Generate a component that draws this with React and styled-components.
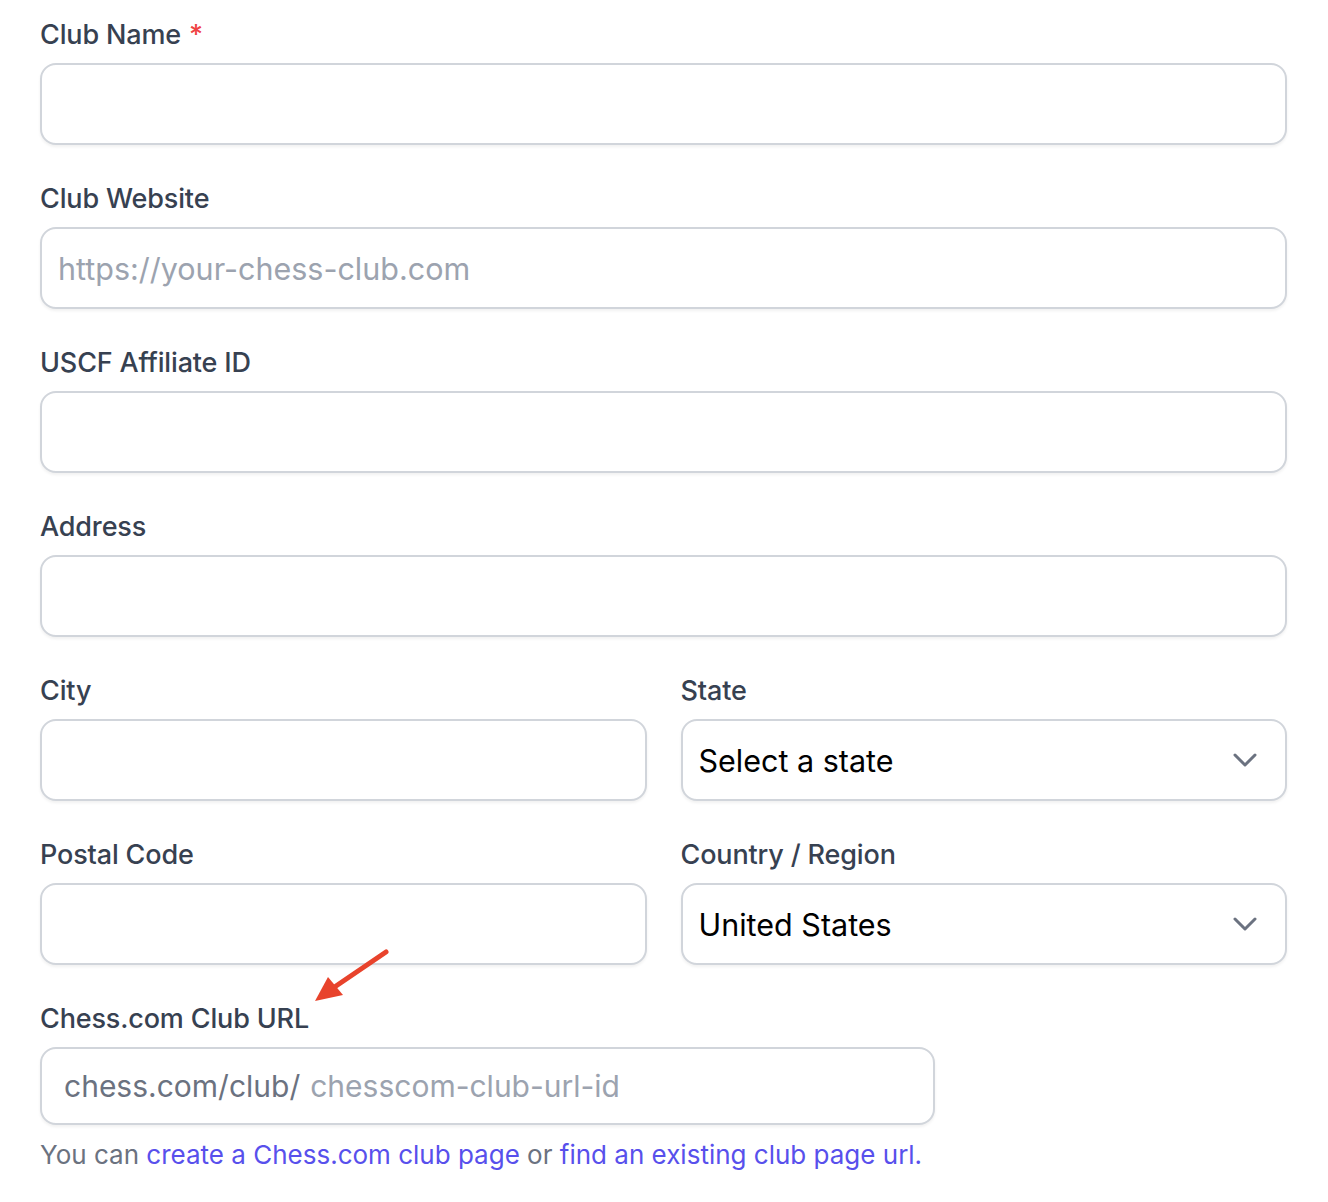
import React from "react";
import styled, { createGlobalStyle } from "styled-components";

const GlobalStyle = createGlobalStyle`
  html, body {
    margin: 0;
    background: #ffffff;
  }
  body {
    font-family: Inter, "Noto Sans", "Liberation Sans", sans-serif;
    -webkit-font-smoothing: antialiased;
  }
  * {
    box-sizing: border-box;
  }
`;

const Page = styled.div`
  position: relative;
  width: 1328px;
  min-height: 1202px;
  padding: 15px 41px 0 40px;
`;

const Form = styled.form`
  display: grid;
  row-gap: 34px;
`;

const TwoCol = styled.div`
  display: grid;
  grid-template-columns: 1fr 1fr;
  column-gap: 34px;
`;

const Field = styled.div`
  display: flex;
  flex-direction: column;
  gap: 8px;
  width: ${(p) => p.width || "100%"};
`;

const Label = styled.label`
  font-size: 27px;
  line-height: 40px;
  font-weight: 500;
  letter-spacing: -0.15px;
  color: #374151;
`;

const Required = styled.span`
  color: #ef4444;
  margin-left: 8px;
`;

const Input = styled.input`
  height: 82px;
  width: 100%;
  padding: 0 16px;
  border: 2px solid #d1d5db;
  border-radius: 16px;
  box-shadow: 0 2px 3px rgba(0, 0, 0, 0.06);
  font-family: inherit;
  font-size: 30.5px;
  color: #111827;
  background: #fff;
  outline: none;

  &::placeholder {
    color: #9ca3af;
  }
`;

const SelectBox = styled.div`
  height: 82px;
  display: flex;
  align-items: center;
  padding: 0 28px 0 0;
  border: 2px solid #d1d5db;
  border-radius: 16px;
  box-shadow: 0 2px 3px rgba(0, 0, 0, 0.06);
  background: #fff;
`;

const Select = styled.select`
  flex: 1;
  height: 100%;
  appearance: none;
  border: none;
  background: transparent;
  padding: 0 16px;
  font-family: inherit;
  font-size: 30.5px;
  color: #000;
  outline: none;
`;

const Chevron = styled.svg`
  width: 24px;
  height: 14px;
  flex: none;
`;

const UrlBox = styled.div`
  height: 78px;
  display: flex;
  align-items: center;
  padding: 0 22px;
  border: 2px solid #d1d5db;
  border-radius: 16px;
  box-shadow: 0 2px 3px rgba(0, 0, 0, 0.06);
  background: #fff;
`;

const Prefix = styled.span`
  font-size: 30px;
  color: #6b7280;
  white-space: nowrap;
`;

const UrlInput = styled.input`
  flex: 1;
  border: none;
  outline: none;
  padding: 0 0 0 10px;
  font-family: inherit;
  font-size: 30px;
  background: transparent;

  &::placeholder {
    color: #9ca3af;
  }
`;

const Help = styled.p`
  margin: 2px 0 0;
  font-size: 26px;
  line-height: 40px;
  color: #6b7280;
`;

const Link = styled.a`
  color: #5850ec;
  text-decoration: none;
`;

const Arrow = styled.svg`
  position: absolute;
  left: 310px;
  top: 946px;
  width: 82px;
  height: 60px;
  pointer-events: none;
`;

function ChevronDown() {
  return (
    <Chevron viewBox="0 0 24 14" fill="none">
      <path
        d="M2 2l10 10L22 2"
        stroke="#6b7280"
        strokeWidth="3"
        strokeLinecap="round"
        strokeLinejoin="round"
      />
    </Chevron>
  );
}

function SelectField({ label, value, options }) {
  return (
    <Field>
      <Label>{label}</Label>
      <SelectBox>
        <Select defaultValue={value}>
          {options.map((o) => (
            <option key={o}>{o}</option>
          ))}
        </Select>
        <ChevronDown />
      </SelectBox>
    </Field>
  );
}

export default function App() {
  return (
    <>
      <GlobalStyle />
      <Page>
        <Form onSubmit={(e) => e.preventDefault()}>
          <Field>
            <Label>
              Club Name<Required>*</Required>
            </Label>
            <Input type="text" />
          </Field>

          <Field>
            <Label>Club Website</Label>
            <Input type="url" placeholder="https://your-chess-club.com" />
          </Field>

          <Field>
            <Label>USCF Affiliate ID</Label>
            <Input type="text" />
          </Field>

          <Field>
            <Label>Address</Label>
            <Input type="text" />
          </Field>

          <TwoCol>
            <Field>
              <Label>City</Label>
              <Input type="text" />
            </Field>
            <SelectField
              label="State"
              value="Select a state"
              options={["Select a state", "California", "New York", "Texas"]}
            />
          </TwoCol>

          <TwoCol>
            <Field>
              <Label>Postal Code</Label>
              <Input type="text" />
            </Field>
            <SelectField
              label="Country / Region"
              value="United States"
              options={["United States", "Canada", "Mexico"]}
            />
          </TwoCol>

          <Field width="895px">
            <Label>Chess.com Club URL</Label>
            <UrlBox>
              <Prefix>chess.com/club/</Prefix>
              <UrlInput type="text" placeholder="chesscom-club-url-id" />
            </UrlBox>
            <Help>
              You can <Link href="#">create a Chess.com club page</Link> or{" "}
              <Link href="#">find an existing club page url.</Link>
            </Help>
          </Field>
        </Form>

        <Arrow viewBox="0 0 82 60">
          <line
            x1="76"
            y1="6"
            x2="26"
            y2="40"
            stroke="#e8432c"
            strokeWidth="5"
            strokeLinecap="round"
          />
          <polygon points="5,55 18,31 33,49" fill="#e8432c" />
        </Arrow>
      </Page>
    </>
  );
}
